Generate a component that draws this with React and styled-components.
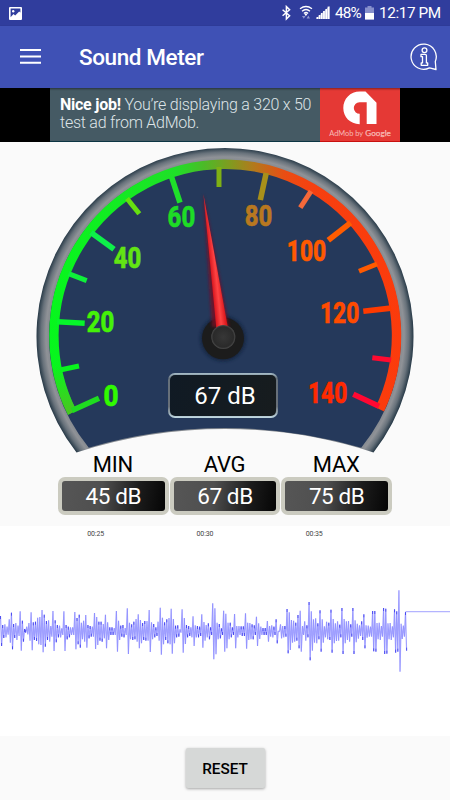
import React from 'react';
import styled, { createGlobalStyle } from 'styled-components';

const GlobalStyle = createGlobalStyle`
  * { box-sizing: border-box; }
  body {
    margin: 0;
    background: #fafafa;
    font-family: Roboto, "Noto Sans", sans-serif;
  }
  svg { display: block; }
`;

const Screen = styled.div`
  width: 450px;
  height: 800px;
  display: flex;
  flex-direction: column;
  overflow: hidden;
  background: #fafafa;
`;

const StatusBar = styled.div`
  flex: none;
  height: 26px;
  padding: 0 10px 0 9px;
  display: flex;
  align-items: center;
  background: #303d9d;
  color: #fff;
`;

const Spacer = styled.div`
  flex: 1;
`;

const StatusText = styled.span`
  width: ${(props) => props.width}px;
  margin-left: ${(props) => props.gap}px;
  font-size: 15.3px;
  line-height: 26px;
  letter-spacing: ${(props) => props.spacing}px;
  white-space: nowrap;
`;

const Toolbar = styled.div`
  flex: none;
  position: relative;
  height: 62px;
  padding: 0 12px 0 20px;
  display: flex;
  align-items: center;
  background: #3f51b5;
  box-shadow: 0 1px 2px rgba(0, 0, 0, 0.45);
`;

const Title = styled.h1`
  flex: 1;
  margin: 0 0 0 38px;
  font-size: 22.5px;
  font-weight: 500;
  letter-spacing: -0.4px;
  line-height: 30px;
  color: #fff;
`;

/* Black strip with the 320 x 50 ad in the middle */
const AdStrip = styled.div`
  flex: none;
  height: 54px;
  display: flex;
  justify-content: center;
  background: #000;
`;

const AdText = styled.div`
  width: 270px;
  padding: 8px 0 0 10px;
  background: #455a64;
  border-bottom: 1px solid #0c3543;
  color: #dfe5e8;
  font-size: 16px;
  font-weight: 300;
  letter-spacing: -0.25px;
  line-height: 18px;
  white-space: nowrap;
  b {
    color: #fff;
    font-weight: 700;
  }
`;

const AdLogo = styled.div`
  width: 80px;
  background: #e53935;
  border-bottom: 1px solid #c8100f;
`;

const DialArea = styled.div`
  flex: none;
  position: relative;
  height: 312px;
`;

/* Digital readout lying over the dial */
const Readout = styled.div`
  position: absolute;
  left: 168px;
  top: 231px;
  width: 110px;
  height: 45px;
  padding: 2px 0 0 4px;
  border: 2.5px solid transparent;
  border-radius: 7px;
  background:
    linear-gradient(100deg, #101a24, #171c1e) padding-box,
    linear-gradient(#a9bfca 0%, #66717b 12%, #686f78 75%, #c3dbe4 100%) border-box;
  color: #fff;
  font-size: 24px;
  line-height: 39px;
  text-align: center;
`;

const Stats = styled.div`
  flex: none;
  height: 72px;
  padding: 0 58px;
  display: flex;
  gap: 1px;
`;

const Stat = styled.div`
  flex: 1;
  display: flex;
  flex-direction: column;
  align-items: center;
`;

const StatLabel = styled.div`
  height: 23px;
  padding-right: 1px;
  font-size: 22px;
  line-height: 22px;
  letter-spacing: -0.2px;
  color: #000;
`;

const StatValue = styled.div`
  width: 100%;
  height: 38px;
  border: 4px solid transparent;
  border-radius: 7px;
  background:
    linear-gradient(100deg, #565656 0%, #4f4f4f 38%, #1c1c1c 72%, #050505 100%) padding-box,
    linear-gradient(#cbcbc0, #cbcbc0) border-box;
  color: #fff;
  font-size: 22.5px;
  letter-spacing: -0.4px;
  line-height: 31px;
  text-align: center;
`;

const ChartPanel = styled.div`
  flex: none;
  height: 210px;
  background: #fff;
`;

const TimeAxis = styled.div`
  height: 14px;
  padding-left: 41px;
  display: grid;
  grid-template-columns: repeat(3, 109.3px);
  font-size: 7px;
  line-height: 16px;
  letter-spacing: -0.1px;
  text-align: center;
  color: #444;
`;

const Footer = styled.div`
  flex: 1;
  display: flex;
  justify-content: center;
  align-items: flex-start;
  padding-top: 12px;
`;

const ResetButton = styled.button`
  width: 79px;
  height: 40px;
  padding: 1px 0 0;
  border: 0;
  border-radius: 2px;
  background: #d6d8d7;
  box-shadow: 0 1px 3px rgba(0, 0, 0, 0.35);
  font-family: inherit;
  font-size: 15.3px;
  font-weight: 500;
  color: #000;
`;

/* x1, y1 on the arc, x2, y2 at the inner end */
const ticks = [
  [72, 410.5, 99, 398.3, '#1fdc20'],
  [60, 370, 79, 366, '#08f41c'],
  [57, 321.7, 84.7, 323.3, '#06f62a'],
  [68.5, 273.7, 86.7, 280.7, '#0ff03a'],
  [91, 232.4, 114, 249.3, '#0ef04a'],
  [127, 198.5, 139.3, 213.7, '#66e010'],
  [171.4, 176.5, 180, 202.7, '#1fe02a'],
  [219, 167, 219, 187, '#7fb014'],
  [266.2, 173, 260.3, 200, '#a8901a'],
  [311, 191.2, 300.3, 207.7, '#f5693a'],
  [350.6, 222.8, 328.3, 240.3, '#ff5c00'],
  [377, 264, 359, 271.3, '#ff5a00'],
  [391, 308.1, 363.3, 311.3, '#ff3a00'],
  [391, 360.1, 372.3, 357.7, '#ff0a30'],
  [379, 406.3, 353.3, 394.3, '#ff0832'],
];

const marks = [
  { text: '0', x: 103.5, y: 405.7, w: 15, color: '#30fa00' },
  { text: '20', x: 86.8, y: 332.3, w: 27.6, color: '#45f208' },
  { text: '40', x: 113.8, y: 268.2, w: 27.6, color: '#62e414' },
  { text: '60', x: 167.6, y: 227.4, w: 27.6, color: '#1edc26' },
  { text: '80', x: 244.7, y: 225.8, w: 27.6, color: '#b97820' },
  { text: '100', x: 286.8, y: 261.3, w: 39.3, color: '#ff5a00' },
  { text: '120', x: 320, y: 322.6, w: 39.3, color: '#ff4b00' },
  { text: '140', x: 308, y: 402.6, w: 39.3, color: '#ff2a00' },
];

/* Peaks and troughs of the signal, three stretches of 150px each, in thirds of a pixel */
const wave = [
  {
    top: [108, 135, 133, 140, 118, 98, 132, 129, 137, 94, 122, 147, 140, 129, 97, 127, 125, 113, 111, 90, 104, 123, 121, 138, 93, 121, 135, 137, 145, 94, 135, 140, 142, 142, 96, 114, 104, 128, 122, 105, 135, 138, 140, 99, 111, 125, 125, 132, 104, 127, 142, 142, 144, 93, 122, 137, 135, 144, 85, 128, 133, 125, 117, 103, 120, 129, 123, 123, 90],
    low: [198, 174, 172, 164, 188, 208, 174, 180, 168, 212, 185, 158, 163, 182, 211, 180, 183, 193, 195, 217, 200, 180, 185, 170, 213, 187, 172, 172, 165, 213, 178, 172, 165, 165, 208, 193, 203, 178, 185, 203, 175, 170, 170, 207, 195, 182, 185, 175, 205, 180, 165, 165, 165, 215, 180, 170, 172, 165, 222, 178, 180, 178, 185, 205, 190, 180, 182, 182, 216],
    from: 0,
    to: 446,
  },
  {
    top: [127, 132, 142, 125, 83, 113, 127, 118, 114, 86, 117, 137, 136, 148, 88, 114, 135, 138, 142, 109, 136, 138, 140, 103, 126, 135, 130, 142, 70, 85, 128, 132, 145, 92, 101, 128, 128, 142, 102, 138, 138, 139, 139, 100, 128, 129, 133, 136, 110, 130, 140, 144, 144, 123, 138, 136, 140, 118, 153, 133, 138, 138, 87, 97, 120, 122, 128, 105, 92],
    low: [178, 172, 168, 182, 224, 193, 180, 190, 193, 221, 190, 172, 170, 158, 218, 192, 172, 168, 172, 198, 172, 172, 168, 203, 182, 172, 178, 165, 238, 223, 178, 175, 165, 215, 205, 178, 172, 165, 205, 172, 165, 168, 168, 206, 180, 178, 178, 165, 198, 177, 165, 165, 165, 185, 170, 172, 165, 190, 155, 175, 172, 170, 220, 210, 188, 185, 182, 205, 215],
    from: 3,
    to: 449,
  },
  {
    top: [138, 124, 136, 66, 94, 118, 115, 130, 91, 118, 139, 125, 128, 89, 117, 130, 124, 134, 84, 117, 124, 123, 133, 84, 121, 131, 136, 124, 103, 136, 137, 140, 93, 93, 129, 128, 138, 84, 86, 130, 129, 139, 88, 94, 31, 131, 137, 96],
    low: [165, 182, 172, 241, 212, 188, 190, 178, 215, 188, 172, 178, 180, 218, 190, 183, 182, 172, 222, 190, 180, 185, 170, 222, 187, 176, 168, 180, 205, 173, 170, 170, 214, 215, 178, 180, 170, 222, 221, 178, 180, 172, 218, 215, 275, 177, 170, 212],
    from: 6,
    to: 315,
  },
];

const samples = wave.flatMap(({ top, low, from, to }, part) => {
  const step = (to - from) / (top.length - 1);
  return top.map((value, i) => ({
    x: part * 150 + (from + i * step) / 3 + 0.5,
    top: 40 + value / 3,
    low: 40 + low[i] / 3,
  }));
});

const line = samples
  .map(({ x, top, low }) => `${x.toFixed(2)},${top.toFixed(2)} ${(x + 1.1).toFixed(2)},${low.toFixed(2)}`)
  .join(' ');

/* The hairline gets darker where it turns */
const tips = samples
  .filter((s, i) => i % 5 < 2)
  .map(({ x, top, low }) => `M${x.toFixed(2)} ${top.toFixed(2)}v3M${(x + 1.1).toFixed(2)} ${low.toFixed(2)}v-3`)
  .join('');

const PictureIcon = () => (
  <svg width="13" height="13" viewBox="0 0 13 13">
    <path fillRule="evenodd" fill="#fff" d="M1 0h11q1 0 1 1v11q0 1-1 1H1q-1 0-1-1V1q0-1 1-1zM1.6 1.6v8.6L4.5 7l1.7 1.6 4-4.2 1.2 1.2V1.6z" />
    <circle cx="4.2" cy="4.2" r="1.2" fill="#fff" />
  </svg>
);

const StatusIcons = () => (
  <svg width="50" height="16" viewBox="280 5 50 16">
    <path d="M282.6 9.7l7 6-3.2 3.3V6.6l3.2 3.2-7 6" fill="none" stroke="#fff" strokeWidth="1.5" />
    <g fill="none" stroke="#fff" strokeWidth="1.3">
      <path d="M300 8.8q6-4.6 12 0" />
      <path d="M302 11.2q4-3.4 8 0" />
      <path d="M303.9 13.4q2.1-1.8 4.2 0" />
    </g>
    <path d="M305.9 13l1.4 1.4-1.4 1.5-1.4-1.5z" fill="#fff" />
    <path d="M302 16h3.6l-1.8 2.8zM306.6 18.4l1.7-2.8 1.7 2.8z" fill="#8d95cf" />
    <path d="M316 19L329.5 6v13z" fill="#fff" opacity="0.5" />
    <g fill="#fff">
      <rect x="316.5" y="17" width="1.6" height="2" />
      <rect x="318.7" y="15" width="1.6" height="4" />
      <rect x="320.9" y="13" width="1.6" height="6" />
      <rect x="323.1" y="11" width="1.7" height="8" />
      <rect x="325.4" y="9" width="1.7" height="10" />
      <rect x="327.6" y="6.6" width="1.9" height="12.4" />
    </g>
  </svg>
);

const BatteryIcon = () => (
  <svg width="9" height="14" viewBox="0 0 9 14">
    <path d="M2.5 0h4v1.4H9V7H0V1.4h2.5z" fill="#8790cc" />
    <path d="M0 7h9v6.6H0z" fill="#fff" />
  </svg>
);

const MenuIcon = () => (
  <svg width="21" height="16" viewBox="0 0 21 16">
    <path d="M0 1h21M0 7.5h21M0 13.8h21" stroke="#fff" strokeWidth="2" />
  </svg>
);

const InfoIcon = () => (
  <svg width="28" height="28" viewBox="0 0 28 28" fill="none" stroke="#fff" strokeWidth="1.3">
    <path d="M25.3 18.5A12.6 12.6 0 1 0 19.4 24.9L26 26.5z" strokeLinejoin="round" />
    <circle cx="14.5" cy="7.3" r="2.4" />
    <path d="M11 11.3h4.2q1.2 0 1.2 1.2v7.4h1.3v2.4h-6.5v-2.4h1.3v-6.2H11z" strokeWidth="1.3" strokeLinejoin="round" />
  </svg>
);

const AdMobLogo = () => (
  <svg width="80" height="53" viewBox="0 0 80 53">
    <path d="M39.7 36.2C30 36 23.3 29 23.3 20S30 3.5 40 3.5H45.5L56.5 14.8V36H46.7V14.2H39.5A5.8 5.8 0 0 0 39.7 25.8z" fill="#fff" />
    <g fill="#f8b9b5" fontFamily='Lato, "Open Sans", sans-serif' fontSize="8">
      <text x="9.2" y="48.3" textLength="34" lengthAdjust="spacingAndGlyphs">AdMob by</text>
      <text x="45.3" y="48.3" textLength="25.6" lengthAdjust="spacingAndGlyphs" stroke="#f8b9b5" strokeWidth="0.25">Google</text>
    </g>
  </svg>
);

const Dial = () => (
  <svg width="450" height="312" viewBox="0 142 450 312">
    <defs>
      <radialGradient id="rim" gradientUnits="userSpaceOnUse" cx="225" cy="336" r="188.5">
        <stop offset="0.93" stopColor="#858a90" />
        <stop offset="0.95" stopColor="#8f9297" />
        <stop offset="0.975" stopColor="#68727b" />
        <stop offset="1" stopColor="#273947" />
      </radialGradient>
      <linearGradient id="scale" gradientUnits="userSpaceOnUse" x1="49" y1="0" x2="401" y2="0">
        <stop offset="0" stopColor="#06f71d" />
        <stop offset="0.36" stopColor="#1fe028" />
        <stop offset="0.44" stopColor="#4cba28" />
        <stop offset="0.51" stopColor="#7d9d20" />
        <stop offset="0.58" stopColor="#b17a1c" />
        <stop offset="0.67" stopColor="#e94d14" />
        <stop offset="0.75" stopColor="#f64010" />
        <stop offset="1" stopColor="#fb3b0c" />
      </linearGradient>
      <linearGradient id="scaleEnd" gradientUnits="userSpaceOnUse" x1="0" y1="365" x2="0" y2="414">
        <stop offset="0" stopColor="#4bc421" stopOpacity="0" />
        <stop offset="1" stopColor="#4bc421" />
      </linearGradient>
      <linearGradient id="needle" gradientUnits="userSpaceOnUse" x1="208" y1="290" x2="227" y2="288">
        <stop offset="0.25" stopColor="#d91820" />
        <stop offset="0.5" stopColor="#ff4343" />
        <stop offset="0.8" stopColor="#d51318" />
      </linearGradient>
      <radialGradient id="cap">
        <stop offset="0" stopColor="#373737" />
        <stop offset="0.85" stopColor="#2a2a2a" />
        <stop offset="1" stopColor="#4c4c4c" />
      </radialGradient>
      <filter id="glow" x="-100%" y="-10%" width="300%" height="120%">
        <feGaussianBlur stdDeviation="1.6" />
      </filter>
    </defs>
    <path d="M76.5 452.5A188.5 188.5 0 1 1 373.5 452.5A481 481 0 0 0 76.5 452.5z" fill="url(#rim)" />
    <path d="M88.8 447.8A176 176 0 1 1 361.2 447.8A481 481 0 0 0 88.8 447.8z" fill="#25395b" />
    <path d="M72.2 412.6A171.3 171.3 0 1 1 379.8 409.4" fill="none" stroke="url(#scale)" strokeWidth="9.4" />
    <path d="M72.2 412.6A171.3 171.3 0 0 1 56 365" fill="none" stroke="url(#scaleEnd)" strokeWidth="9.4" />
    {ticks.map(([x1, y1, x2, y2, color], i) => (
      <line key={i} x1={x1} y1={y1} x2={x2} y2={y2} stroke={color} strokeWidth={i % 2 ? 5 : 5.6} />
    ))}
    {marks.map(({ text, x, y, w, color }) => (
      <text key={text} x={x} y={y} fill={color} stroke={color} strokeWidth="0.6" fontFamily="Roboto, sans-serif"
        fontSize="29.5" fontWeight="800" textLength={w} lengthAdjust="spacingAndGlyphs">{text}</text>
    ))}
    <circle cx="223" cy="338.5" r="23" fill="#101c33" opacity="0.6" filter="url(#glow)" />
    <circle cx="223" cy="338.3" r="21" fill="#1c1c1c" />
    <path d="M203.4 194L212 327h17z" fill="#7c0f20" opacity="0.8" filter="url(#glow)" />
    <path d="M203.4 194L216.4 329h11.8z" fill="url(#needle)" />
    <circle cx="223.3" cy="337" r="12" fill="url(#cap)" />
  </svg>
);

const stats = [
  { label: 'MIN', value: '45 dB' },
  { label: 'AVG', value: '67 dB' },
  { label: 'MAX', value: '75 dB' },
];

const times = ['00:25', '00:30', '00:35'];

const App = () => (
  <Screen>
    <GlobalStyle />
    <StatusBar>
      <PictureIcon />
      <Spacer />
      <StatusIcons />
      <StatusText width={27} gap={5} spacing={-0.8}>48%</StatusText>
      <svg width="3" height="1" />
      <BatteryIcon />
      <StatusText width={61} gap={5} spacing={-0.4}>12:17 PM</StatusText>
    </StatusBar>
    <Toolbar>
      <MenuIcon />
      <Title>Sound Meter</Title>
      <InfoIcon />
    </Toolbar>
    <AdStrip>
      <AdText><b>Nice job!</b> You’re displaying a 320 x 50<br />test ad from AdMob.</AdText>
      <AdLogo><AdMobLogo /></AdLogo>
    </AdStrip>
    <DialArea>
      <Dial />
      <Readout>67 dB</Readout>
    </DialArea>
    <Stats>
      {stats.map(({ label, value }) => (
        <Stat key={label}>
          <StatLabel>{label}</StatLabel>
          <StatValue>{value}</StatValue>
        </Stat>
      ))}
    </Stats>
    <ChartPanel>
      <TimeAxis>
        {times.map((time) => <span key={time}>{time}</span>)}
      </TimeAxis>
      <svg width="450" height="196" viewBox="0 0 450 196" fill="none">
        <polyline points={line} stroke="#b4b4ff" strokeWidth="1.2" strokeLinejoin="bevel" />
        <polyline points={line} stroke="#0000ff" strokeWidth="0.12" />
        <path d={tips} stroke="#0000e0" strokeWidth="0.5" />
        <path d="M405.5 71.7H450" stroke="#b4b4ff" strokeWidth="1.2" />
      </svg>
    </ChartPanel>
    <Footer>
      <ResetButton>RESET</ResetButton>
    </Footer>
  </Screen>
);

export default App;
